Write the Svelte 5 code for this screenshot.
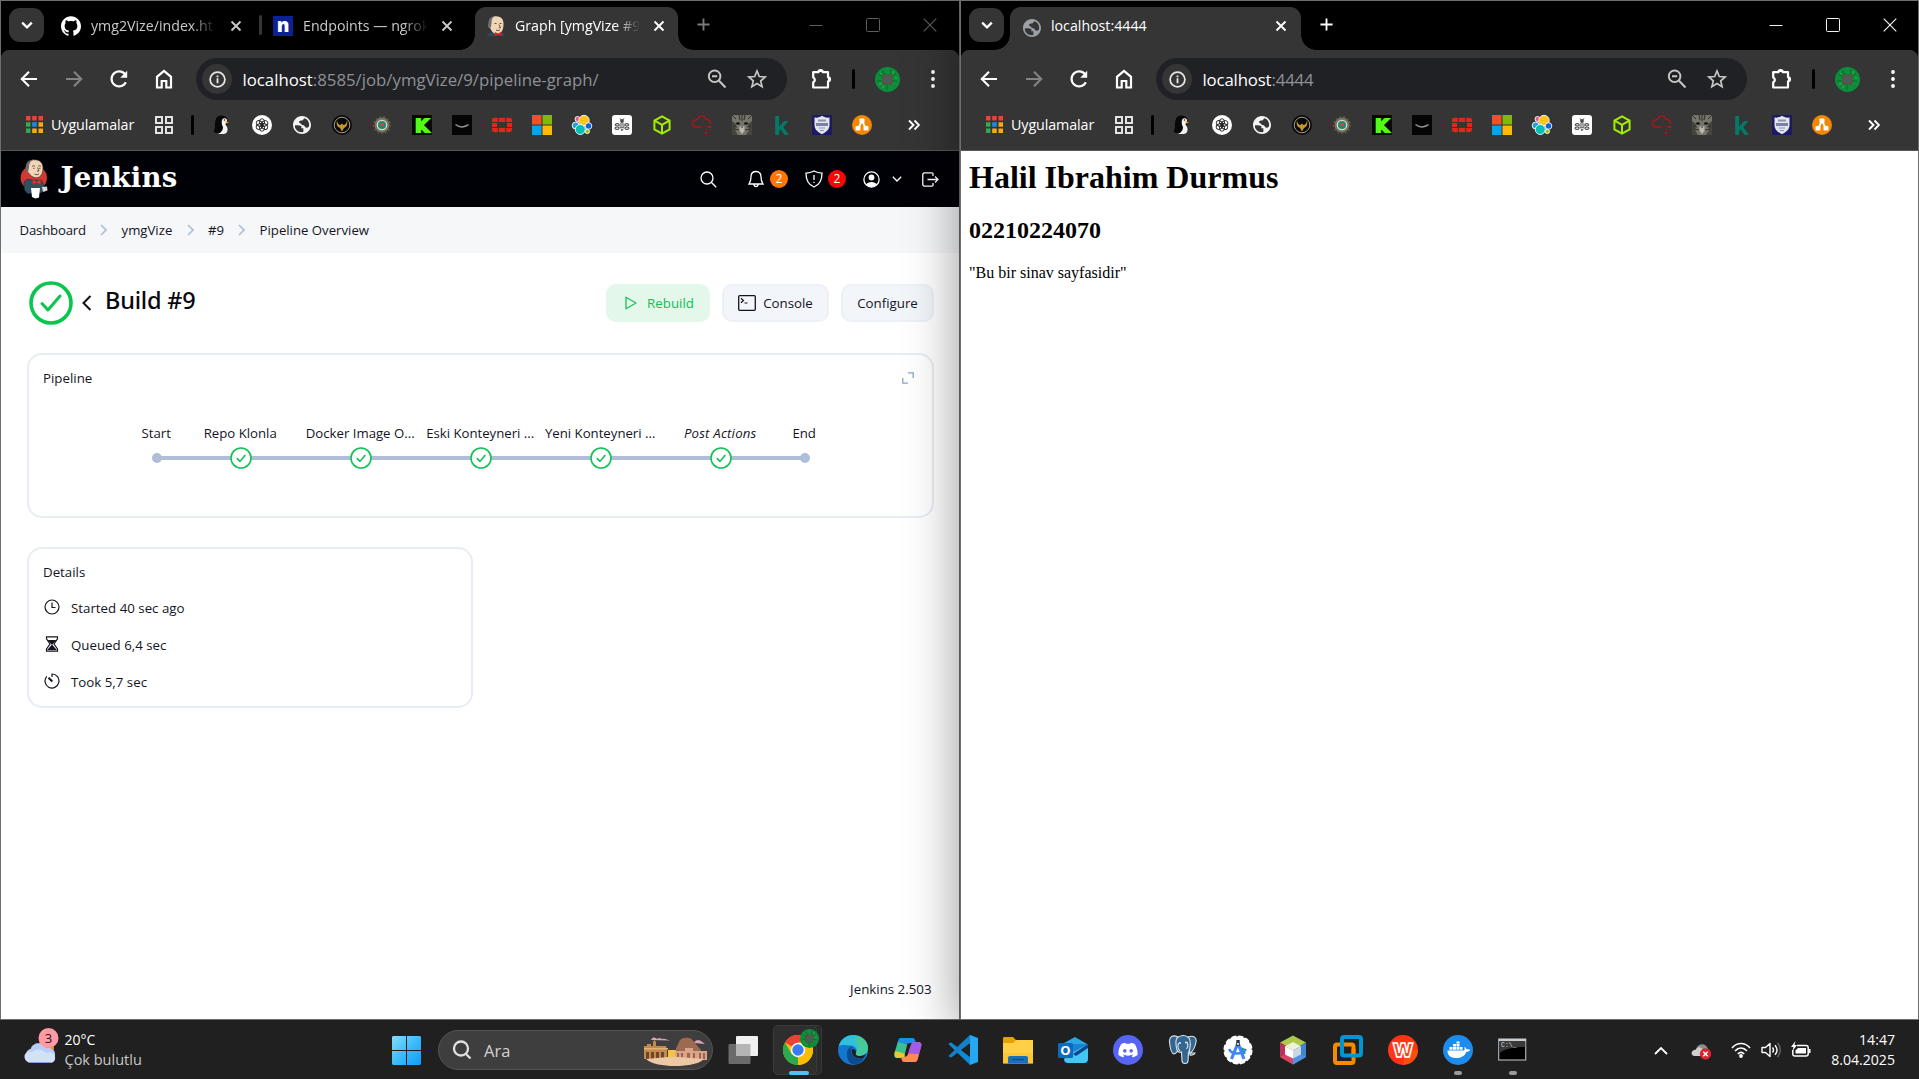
<script>
  // Drawings are inner SVG markup; each set shares one viewBox.
  // Toolbar glyphs: 24 x 24
  const glyphs = {
    back: '<path d="M20 12H5M12 4.800 4.800 12l7.200 7.200" fill="none" stroke="#fff" stroke-width="2.100"/>',
    forward: '<path d="M4 12h15M12 4.800l7.200 7.200-7.200 7.200" fill="none" stroke="#848484" stroke-width="2.100"/>',
    reload: '<path d="M18.800 15.200A7.500 7.500 0 1 1 19 9" fill="none" stroke="#fff" stroke-width="2.200"/><path d="M20.200 3.800v7h-7z" fill="#fff"/>',
    home: '<path d="M5 20.500V9.800L12 4l7 5.800V20.500H14.300V14H9.700V20.500z" fill="none" stroke="#fff" stroke-width="2.200"/>',
    info: '<circle cx="12" cy="12" r="7.700" fill="none" stroke="#e8e8e8" stroke-width="1.800"/><path d="M12 10.800v5M12 7.800v1.900" stroke="#e8e8e8" stroke-width="1.900"/>',
    zoom: '<circle cx="9.600" cy="9.300" r="5.800" fill="none" stroke="#c7c7c7" stroke-width="1.900"/><path d="M13.800 13.500 20.500 20.500M7 9.300h5.200" fill="none" stroke="#c7c7c7" stroke-width="2"/>',
    star: '<path d="M12 4l2.300 5.500 5.900.500-4.500 3.900 1.400 5.800-5.100-3.100-5.100 3.100 1.400-5.800L3.800 10l5.900-.500z" fill="none" stroke="#c7c7c7" stroke-width="1.700"/>',
    puzzle: '<path d="M4.200 5.200h5.300a2.100 2.100 0 0 1 4.200 0h5.300v5.100a2 2 0 0 1 0 4v6.200H4.200v-5.200a2.600 2.600 0 0 0 0-4.800z" fill="none" stroke="#fff" stroke-width="2.200" stroke-linejoin="round"/><path d="M9.600 5a2.200 2.200 0 0 1 4.200 0zM19 10.300a2.100 2.100 0 0 1 0 4z" fill="#fff"/>',
    menu: '<g fill="#fff"><circle cx="12" cy="5" r="1.900"/><circle cx="12" cy="12" r="1.900"/><circle cx="12" cy="19" r="1.900"/></g>',
    down: '<path d="M7.200 9.600 12 14.400l4.800-4.800" fill="none" stroke="#fff" stroke-width="2.200"/>',
    globe: '<path transform="translate(1.200 1.200) scale(.9)" fill="currentColor" d="M12 2C6.480 2 2 6.480 2 12s4.480 10 10 10 10-4.480 10-10S17.520 2 12 2zM4 12.500c3-.300 5.500-.200 7 .500.800.600.500 1.500 0 2.500h2.500v4.300c-5 1-9.500-2.300-9.500-7.300zM12.500 12c-1.500-.200-1.200-2-3-2.300-1.200-.300-1-1.700 0-2.200 1.500-.800 3.500.300 4-1.500.200-.700.800-1.300 1.500-1.500 3 1.200 5 4 5 7.500-.200 2-1 3-2.500 3-1.500.2-2-.5-2.500-1.500-.5-.9-1-1.400-2.500-1.500z"/>'
  };

  const board = '<circle cx="12.500" cy="12.500" r="12.500" fill="#0b8f3c"/><g fill="none" stroke="#0a5f2a" stroke-width=".8"><path d="M3 8h4v3M8 3v4h3M16 2v5M21 6l-3 3M22 14h-5M20 19l-4-3M12 23v-5M6 20l3-4M2 14h5"/></g><g stroke="#67bb43" stroke-width=".7"><path d="M5 6l3 2M18 4v3M19 18l-2-2M8 21v-3M4 17h3M20 11h2"/></g><rect x="7.500" y="7.500" width="10" height="10" fill="#5b4a30"/><rect x="8.300" y="8.300" width="8.400" height="8.400" fill="#575757"/>';

  // Butler figure, 28 x 40
  const butler = '<ellipse cx="13.800" cy="18.800" rx="13.200" ry="12.600" fill="#d33833"/><path d="M7 20.500 4 23l.5 8 3 3.500 13-.5 4-2.500-1-6-2-4z" fill="#335061" stroke="#1c2a33" stroke-width=".6"/><path d="M6.500 8C6 3 10 .700 14.500.700c5.500 0 8.500 3.500 8.500 8.300 0 5.500-2 9.500-6.500 9.800-3.500.2-6.500-2.500-8-5C7 13 5.500 11.500 6.500 8z" fill="#f0d6b7" stroke="#3a3029" stroke-width=".7"/><path d="M6 11.500C4.500 5 8.500 1 13 .800 9.500 3 9 6 9 8.500l-1 4.500z" fill="#6d6b6d"/><path d="M12 7.500c1-1 2-1 3 0M18 7.500c1-1 2-1 3 0M17.500 8.500l1.500 3.500-2 .2M14.500 15c2 1.200 3.500.5 4.500 0M13 9.300h1.500M19 9.300h1.500" stroke="#4b3526" stroke-width=".8" fill="none"/><path d="M12.500 20l4 2.800 4.500-3-.5 6-4-2-4 2z" fill="#d33833" stroke="#831" stroke-width=".4"/><path d="M11 29h9l-1 9.500-3.500 1-3.500-1.500z" fill="#fff"/><path d="M22 28l5-.5.500 4-4.500 1.500z" fill="#d8d8d8"/>';

  // Butler portrait, 20 x 20
  const butlerHead = '<path d="M1 20c0-2 3-3.500 6-3.500h9c1.500.5 2.500 1.500 2.500 3.500z" fill="#2d4a5c"/><path d="M3 7.500C2.500 2.500 6 .200 10 .200c5 0 7.500 2.800 7.500 7.500 0 5.500-1.500 9.800-6 10.300-3.500.3-6-2.500-7-5.500C2.500 11.500 2 10 3 7.500z" fill="#f0d6b7"/><path d="M2.500 11C1.300 4.500 4.500.600 9 .300 6 2 5.500 4 5.500 7l-.8 5z" fill="#6d6b6d"/><path d="M8.500 7.500h2M13.500 7.500h2M13 8.500l1.500 3.200-1.800.2M10 14c1.500.8 3 .6 4 0" stroke="#5a4030" stroke-width=".9" fill="none"/><path d="M9 16l3 1.500 3.500-1.800V20L12 18.800 9 20z" fill="#e01f1f"/>';

  // Bookmark favicons: 20 x 20
  const favicons = [
    ['penguin', '<path d="M1.500 16.500C4 14 2 8 4 4 5.500 0 10 0 13 1.500c2.500 1 3 4 2.500 7L14 18H4z" fill="#080808"/><path d="M10 5c1-2.500 4.500-2 5 0 .5 2-1 3-1.500 4.500 3 3 3 9-1.500 9.500H6c3.500-1.500 5-4 5-7-1.500-2-1.500-5-1-7z" fill="#f2f2f2"/><circle cx="12.500" cy="5" r=".8" fill="#111"/><path d="M13.500 6l3.500 1.500-3.500 1.300z" fill="#e7ad18"/>'],
    ['knot', '<circle cx="10" cy="10" r="10" fill="#fff"/><g fill="none" stroke="#222" stroke-width=".9"><ellipse cx="10" cy="7" rx="2.600" ry="3.300"/><ellipse cx="10" cy="7" rx="2.600" ry="3.300" transform="rotate(60 10 10)"/><ellipse cx="10" cy="7" rx="2.600" ry="3.300" transform="rotate(120 10 10)"/><ellipse cx="10" cy="7" rx="2.600" ry="3.300" transform="rotate(180 10 10)"/><ellipse cx="10" cy="7" rx="2.600" ry="3.300" transform="rotate(240 10 10)"/><ellipse cx="10" cy="7" rx="2.600" ry="3.300" transform="rotate(300 10 10)"/></g>'],
    ['globe', '<g color="#f4f4f4" transform="translate(-2 -2)">' + glyphs.globe + '</g>'],
    ['eagle', '<circle cx="10" cy="10" r="10" fill="#0a0a0a"/><circle cx="10" cy="10" r="7.800" fill="none" stroke="#b5ad98" stroke-width=".9"/><path d="M5 5.500c.5 3 2 4.500 3.500 4.500L10 8.500l1.500 1.500C13 10 14.500 8.500 15 5.500c1 4-.5 6.500-3 7.500l-2 3.500L8 13c-2.500-1-4-3.500-3-7.500z" fill="#c7972a"/>'],
    ['crest', '<circle cx="10" cy="10" r="7.500" fill="#77755c"/><circle cx="10" cy="10" r="8.300" fill="none" stroke="#5f5a49" stroke-width="1.400" stroke-dasharray="2 2"/><circle cx="10" cy="10" r="5.300" fill="#d9ded2"/><circle cx="10" cy="10" r="4" fill="#19887b"/><path d="M8 8h4v2.500L10 12l-2-1.500z" fill="#c74a42"/>'],
    ['kick', '<rect width="20" height="20" fill="#060906"/><text x="10" y="16.500" text-anchor="middle" font-family="DejaVu Sans" font-weight="700" font-size="18" fill="#53fc18" stroke="#53fc18" stroke-width="1.800">K</text>'],
    ['smile', '<rect width="20" height="20" fill="#050505"/><path d="M3.500 9.500c4 3 9 3 13 .2" fill="none" stroke="#9a9a9a" stroke-width="1.500"/>'],
    ['firewall', '<g fill="#e1261c"><rect x="6.800" y="2.800" width="6.400" height="4.200"/><rect x="6.800" y="13" width="6.400" height="4.200"/><path d="M0 7V5.500A2.700 2.700 0 0 1 2.700 2.800H5.800V7zM14.200 2.800h3.100A2.700 2.700 0 0 1 20 5.500V7h-5.800zM0 13h5.800v4.200H2.700A2.700 2.700 0 0 1 0 14.500zM14.200 13H20v1.500a2.700 2.700 0 0 1-2.700 2.700h-3.100zM0 8h5v4H0zM15 8h5v4h-5z"/></g>'],
    ['squares', '<path d="M0 0h9.500v9.500H0z" fill="#f25022"/><path d="M10.500 0H20v9.500h-9.500z" fill="#7fba00"/><path d="M0 10.500h9.500V20H0z" fill="#00a4ef"/><path d="M10.500 10.500H20V20h-9.500z" fill="#ffb900"/>'],
    ['dots', '<g stroke="#fff" stroke-width=".9"><circle cx="3.700" cy="10.500" r="3.500" fill="#1aa0e0"/><circle cx="5.500" cy="4" r="2.500" fill="#f04e98"/><circle cx="12" cy="5.500" r="5.200" fill="#fec514"/><circle cx="16.500" cy="11" r="3.300" fill="#0b64dd"/><circle cx="8.300" cy="14.500" r="5" fill="#00bfb3"/><circle cx="15.300" cy="16.400" r="2.200" fill="#93c90e"/></g>'],
    ['bee', '<rect width="20" height="20" rx="3" fill="#fff"/><g fill="#4a4a4a"><circle cx="10" cy="6" r="1.900"/><path d="M8 8.500h4v1H8zM7.500 10.400h5v1h-5zM7.500 12.300h5v1h-5zM8.300 14.200h3.400L10 16.300z"/></g><g fill="none" stroke="#4a4a4a" stroke-width="1.100"><ellipse cx="5.300" cy="9.800" rx="2" ry="1.200"/><ellipse cx="14.700" cy="9.800" rx="2" ry="1.200"/><ellipse cx="5" cy="13.200" rx="2" ry="1.200"/><ellipse cx="15" cy="13.200" rx="2" ry="1.200"/></g><path d="M8 3.300l1 1.700M12 3.300L11 5" stroke="#4a4a4a" stroke-width=".8"/>'],
    ['cube', '<path d="M10 1.300 17.600 5.500v9L10 18.700 2.400 14.500v-9zM2.600 5.700 10 9.900l7.400-4.200M10 9.900v8.700" fill="none" stroke="#9fef00" stroke-width="2"/>'],
    ['cloud', '<path d="M9 12H4a3.500 3.500 0 0 1-.2-7C5 3.500 6 4 6 4c1-4 7-4 7.500.500C17 4 19 6 18.500 9" fill="none" stroke="#b3141a" stroke-width="1.300"/><path d="M10 12h8M13 15h6M12 18.500h3" stroke="#6b2023" stroke-width="1.800" stroke-dasharray="4 1"/><path d="M16 11h3v2h-3zM13 17h2v2h-2z" fill="#a31920"/>'],
    ['cat', '<rect width="20" height="20" fill="#77756b"/><path d="M0 6 4 9l-1 6 3 5H0zM20 6l-4 3 1 6-3 5h6z" fill="#46453f"/><path d="M0 0l4 4M7 0l1 5M10 0v6M13 0l-1 5M20 0l-4 4M2 14l5 1M18 14l-5 1M1 11l4 1M19 11l-4 1" stroke="#2e2d27" stroke-width="1"/><path d="M7.500 11l2.500 1 2.500-1v5L10 19l-2.500-3z" fill="#b9b7ac"/><ellipse cx="6" cy="8.500" rx="2.100" ry="1.300" fill="#16150f"/><ellipse cx="14" cy="8.500" rx="2.100" ry="1.300" fill="#16150f"/><path d="M9 12h2l-1 1.300z" fill="#332"/>'],
    ['kaspersky', '<text x="1.500" y="19.500" font-family="Open Sans" font-weight="700" font-size="25" fill="#037a66">k</text>'],
    ['shield', '<rect width="20" height="20" fill="#1b1a63"/><path d="M2.500 2.500C6 3 8 2 10 .800 12 2 14 3 17.500 2.500V10c0 5-4 7.500-7.500 9.200C6.500 17.500 2.500 15 2.500 10z" fill="#e2e4ea"/><path d="M4 8h12v3H4z" fill="#7a80a8"/><path d="M6 4.500h8v2H6zM7 12.500h6v1H7zM8 15h4v1H8z" fill="#8d93b3"/>'],
    ['nodes', '<circle cx="10" cy="10" r="10" fill="#f08705"/><path d="M10 6 6 13.500M10 6l4 7.500" stroke="#fff" stroke-width="1.800"/><g fill="#fff"><rect x="7.500" y="3.500" width="5" height="4.500" rx=".8"/><rect x="3.500" y="11" width="5" height="4.500" rx=".8"/><rect x="11.500" y="11" width="5" height="4.500" rx=".8"/></g>']
  ];

  // Taskbar programs: 30 x 30
  const apps = [
    ['edge', '<circle cx="15" cy="15" r="15" fill="#1377d0"/><path d="M.800 11.500C2.500 4 8.500 0 15 0c9 0 15 6 15 13 0 5-4 8-8 8-3.500 0-5-1.500-4-3 2-3-.5-7-5-7.500C8 10 3 9 .800 11.500z" fill="#2fc0dc"/><path d="M21 1.200c6 2.300 9 7 9 11.800 0 5-4 8-8 8-3.500 0-5-1.500-4-3 3-6 1-12-3-14z" fill="#4ed07c" opacity=".7"/><path d="M18 17.800c-1 1.700.5 3.200 4 3.200 2.500 0 4.500-.9 6-2.500-.5 1.500-1 2.500-1.800 3.700C24 23.800 20 24 17 22c-3-1.700-3.800-5-3-8 2-.500 5 1.500 4 3.800z" fill="#202020"/><path d="M9 19c0-4 2-7 5.500-7.500-3 4-1 10 4 11.500 3 .800 6 .300 8-.800C23.500 27.500 19 29.500 16 29.500 11 29 9 24 9 19z" fill="#0d4a8f"/>'],
    ['copilot', '<path d="M8 3h11c3 0 3 2 4 5h-5c-3 0-3 2-4 5l-2 7c-1 3-2 3-4 3H4c-3 0-3-2-2.500-5L5 6c.800-2.500 1.500-3 3-3z" fill="#1b8ee6"/><path d="M5 7 2 17c-1 4 0 6 3 6h4c2 0 2.500-1 3.500-4L15 10z" fill="#3dc08b"/><path d="M2 16c-1 5 0 7 3 7h4c2 0 2.500-1 3.500-4z" fill="#e9c928"/><path d="M22 27H12c-3 0-3-2-4-5h3c3 0 3-1 4-4l3-8c1-3 2-3 4-3h3c3 0 4 2 3 5l-3 11c-.800 3-1.500 4-3 4z" fill="#ee5a78"/><path d="M18 10c1-3 2-3 4-3h3c3 0 4 2 3 5l-2 7-11-1z" fill="#a35be8"/><path d="M12 27c-3 0-3-2-4-5h3c2 0 3-1 3.500-3H26l-1 4c-1 3-1.500 4-3 4z" fill="#ff9b4a" opacity=".75"/><path d="M14.500 8.500h3l-3 12h-3z" fill="#202020"/>'],
    ['vscode', '<path d="M22 0l8 3v24l-8 3z" fill="#24a8f2"/><path d="M22 0 9 12 3 7.500.500 9 9 17l-8.500 4L3 22.500 22 8z" fill="#0b72b8"/><path d="M.500 9 3 7.500 22 22v8L.500 9z" fill="#0d8ad3"/><path d="M.500 21 3 22.500 22 8V0L.500 21z" fill="#1480c7"/>'],
    ['files', '<path d="M0 3.500C0 2.500.700 2 1.500 2H10l3 3h15.500c1 0 1.500.600 1.500 1.500V10H0z" fill="#e3a007"/><path d="M0 8h10l3-3h17v23.500H0z" fill="#ffcf45"/><path d="M0 18h30v10.500H0z" fill="#f9be24" opacity=".5"/><path d="M5 28.500V23c0-1.300.800-2 2-2h16c1.200 0 2 .700 2 2v5.500z" fill="#1670bd"/><path d="M9 24.500h12" stroke="#0c4f8d" stroke-width="1.400"/>'],
    ['outlook', '<path d="M6 8 17 2l12 7v4H6z" fill="#2aa7e5"/><path d="M6 9h23v10H6z" fill="#1684d1"/><path d="M10 20 30 9v15c0 2.500-1.500 4-4 4H10c-2 0-4-1-4-4z" fill="#41c8f0"/><path d="M15 19 30 9v4L18 21z" fill="#0a448e"/><rect y="8" width="15" height="15" rx="1.500" fill="#0c69be"/><text x="7.500" y="20" text-anchor="middle" font-family="Open Sans" font-weight="700" font-size="13" fill="#fff">O</text>'],
    ['discord', '<circle cx="15" cy="15" r="15" fill="#5865f2"/><path transform="translate(5.400 5.500) scale(.8)" fill="#fff" d="M20.317 4.370a19.790 19.790 0 00-4.885-1.515c-.211.375-.520.902-.687 1.287-1.845-.276-3.680-.276-5.487 0-.164-.393-.406-.910-.696-1.287a19.736 19.736 0 00-4.885 1.515C.533 9.046-.319 13.580.099 18.058c2.053 1.508 4.041 2.423 6.077 3.030.520-.658.931-1.323 1.226-2.022-.653-.248-1.316-.655-1.914-.998l.445-.440c3.928 1.793 8.180 1.793 12.140 0l.444.441c-.598.350-1.217.656-1.913.998.360.698.731 1.390 1.225 2.022 2.045-.607 4.034-1.522 6.087-3.030.500-5.177-.838-9.674-3.599-13.689zM8.020 15.331c-1.183 0-2.157-1.086-2.157-2.419s.956-2.419 2.157-2.419c1.211 0 2.176 1.095 2.157 2.419 0 1.333-.956 2.419-2.157 2.419zm7.975 0c-1.183 0-2.157-1.086-2.157-2.419s.955-2.419 2.157-2.419c1.211 0 2.176 1.095 2.157 2.419 0 1.333-.946 2.419-2.157 2.419z"/>'],
    ['elephant', '<g fill="#336791" stroke="#dfe5ea" stroke-width="1.100"><path d="M10 2C5-.500 1 1.500 1.500 7c.500 5 2 12 4.500 12 1.500 0 2.500-2 4-3z"/><path d="M20 2c5-2 9 0 8 5-.800 4-3 9-5.500 11H27c0 1.500-3.500 2.500-5 2z"/><path d="M9 3c4-3.500 9-3 12 0 2 3 1.500 11-.500 15l-.500 8c-.300 3-5.500 3.500-6 0l-.500-9c-2 1-4-.500-4.500-2C8 11 7 6 9 3z"/><path d="M10.500 8c-1 3-.500 6 1.500 8M19 7c1 2 1 5-.500 7" fill="none"/></g><circle cx="12" cy="8" r=".9" fill="#fff"/><circle cx="18" cy="7.500" r=".9" fill="#fff"/>'],
    ['compass', '<circle cx="15" cy="15" r="13.700" fill="#fff"/><circle cx="15" cy="15" r="13.800" fill="none" stroke="#fff" stroke-width="1.500" stroke-dasharray="5 2.220"/><path d="M18 12l4 2 .500 5-4 0z" fill="#249a58"/><path d="M15 8 8.500 24M15 8l6 16" stroke="#4285f4" stroke-width="3.200"/><path d="M6 14c3 6 13 6 17 0" stroke="#4285f4" stroke-width="2.600" fill="none"/><rect x="13.300" y="5" width="3.400" height="6" fill="#2f343a"/><circle cx="15" cy="9" r="1" fill="#fff"/>'],
    ['netbeans', '<path d="M15 .500 28 7.500 15 15 2 7.500z" fill="#adc84a"/><path d="M2 7.500 15 15v14.500L2 22z" fill="#b83259"/><path d="M28 7.500 15 15v14.500L28 22z" fill="#3f83d3"/><path d="M2 22l13-6v13.500z" fill="#d84465"/><path d="M28 22l-13-6v13.500z" fill="#4d93e2"/><path d="M15 7l8 4.200-8 4-8-4z" fill="#eef2dd"/><path d="M7 11.200l8 4v8.300l-8-4z" fill="#fff"/><path d="M23 11.200l-8 4v8.300l8-4z" fill="#cbd6e3"/>'],
    ['vmware', '<rect x="2" y="9.500" width="18.500" height="18.500" rx="2" fill="none" stroke="#f38b00" stroke-width="4"/><rect x="9" y="2" width="19" height="18.500" rx="2" fill="none" stroke="#0095d3" stroke-width="4"/><path d="M20.500 14v5" stroke="#f38b00" stroke-width="4"/>'],
    ['wps', '<circle cx="15" cy="15" r="15" fill="#ff3515"/><path d="M15 30A15 15 0 0 0 30 15H18z" fill="#ff5a08" opacity=".7"/><text x="15" y="22" text-anchor="middle" font-family="Inter" font-weight="900" font-size="19" fill="#ff3d12" stroke="#fff" stroke-width="1.500">W</text>'],
    ['docker', '<circle cx="15" cy="15" r="15" fill="#1d8cec"/><path d="M4.500 15.500h15.800c1.500 0 1.700-1.500 1-3.500 1.700.500 2 1.500 2.200 2.300 1.500-.300 3-.100 3.700.500-.700 1.500-2 2-3.700 2C21.500 21.500 18 23 13 23c-5 0-8.500-2-8.500-7.500z" fill="#fff"/><path d="M6.500 12h3v2.800h-3zM10 12h3v2.800h-3zM13.500 12h3v2.800h-3zM10 9h3v2.500h-3zM13.500 9h3v2.500h-3zM13.500 6.500h3v2h-3zM17 12h2.500v2.800H17z" fill="#fff"/>'],
    ['console', '<rect x=".700" y="4" width="27" height="21" fill="#000" stroke="#a9aeb2" stroke-width="1.200"/><path d="M1 4h27v2.300H1z" fill="#c9cdd0"/><path d="M1.500 6.500h25.700V12C17 12 8 13 1.500 18z" fill="#3a3a3a"/><text x="3" y="12" font-family="Liberation Mono" font-size="6.500" fill="#ddd">C:\\_</text>']
  ];

  const chrome = '<circle cx="15" cy="15" r="15" fill="#fbbc04"/><path d="M15 15 2 7.500A15 15 0 0 1 28 7.500H15z" fill="#ea4335"/><path d="M2 7.500A15 15 0 0 0 15 30l6.500-11.200-13-.100z" fill="#2da94f"/><path d="M28 7.500H15v15L15 30A15 15 0 0 0 28 7.500z" fill="#fbbc04"/><path d="M8.500 18.700 15 30l-4-1z" fill="#2da94f"/><circle cx="15" cy="15" r="7.200" fill="#fff"/><circle cx="15" cy="15" r="5.700" fill="#3a7cf0"/>';
  const plaza = '<path d="M7 5c2-4 5-2 6-1 3-2 4 0 5 0 3-1 5 1 8 1.500zM50 8c2-4 4-2 5-3 3 1 4 3 6 4z" fill="#d9a3b5"/><path d="M0 11h3V9h4v2h2V7l1.500-2L12 7v4h10l1 4v9H0z" fill="#c48a4d"/><path d="M0 13h24v1.500H0z" fill="#e2b070"/><path d="M2 17h3v7H2zM7 17h3v7H7zM12 17h3v7h-3zM17 17h3v7h-3z" fill="#6f4629"/><path d="M24 15h8v10h-8z" fill="#f6c343"/><path d="M32 13c3-3 2-9 8-10 5-1 8 0 10 4l7 8v10H32z" fill="#9c6a50"/><path d="M31 16h10v-3h8v3h14v9H31z" fill="#d9a489"/><path d="M33 18h2v5h-2zM37 18h2v5h-2zM43 18h3v6h-3zM49 18h2v6h-2zM55 18h2v6h-2zM59 18h2v6h-2z" fill="#9c6450"/><path d="M2 24l22-2h10l26 2c-6 6-20 7-30 7S7 29 2 24z" fill="#edc8a4"/>';

  const stages = [
    { label: 'Start', x: 128, kind: 'dot' },
    { label: 'Repo Klonla', x: 212, kind: 'ok' },
    { label: 'Docker Image O...', x: 332, kind: 'ok' },
    { label: 'Eski Konteyneri ...', x: 452, kind: 'ok' },
    { label: 'Yeni Konteyneri ...', x: 572, kind: 'ok' },
    { label: 'Post Actions', x: 692, kind: 'ok', italic: true },
    { label: 'End', x: 776, kind: 'dot' }
  ];

  const details = [
    { text: 'Started 40 sec ago', icon: '<circle cx="8" cy="8" r="7"/><path d="M8 3.500V8.500h3.500"/>' },
    { text: 'Queued 6,4 sec', icon: '<path d="M2.500.900h11v2L10 8l3.500 5v2.200h-11V13L6 8 2.500 2.900z"/><path d="M5 4.500h6L8 8zM4.500 13.500 8 9.500l3.500 4z" fill="#14141f"/>' },
    { text: 'Took 5,7 sec', icon: '<path d="M8 4V1a7 7 0 1 1-5.200 2.300"/><path d="M4.500 4.800 8.300 8.500" stroke-width="2"/>' }
  ];

  const crumbs = ['Dashboard', 'ymgVize', '#9', 'Pipeline Overview'];
</script>

{#snippet glyph(name)}
  <svg class="glyph" viewBox="0 0 24 24">{@html glyphs[name]}</svg>
{/snippet}

{#snippet cross(cls)}
  <svg class={cls} viewBox="0 0 12 12"><path d="M1.500 1.500l9 9M10.500 1.500l-9 9" fill="none" stroke="currentColor" stroke-width="1.900" /></svg>
{/snippet}

{#snippet plus(cls)}
  <svg class={cls} viewBox="0 0 14 14"><path d="M7 .500v13M.500 7h13" stroke="currentColor" stroke-width="2" /></svg>
{/snippet}

{#snippet controls(cls)}
  <div class="controls {cls}">
    <svg viewBox="0 0 14 14"><path d="M.500 7.500h13" stroke="currentColor" /></svg>
    <svg viewBox="0 0 14 14"><rect x=".500" y=".500" width="13" height="13" rx="1" fill="none" stroke="currentColor" /></svg>
    <svg viewBox="0 0 14 14"><path d="M.700.700l12.600 12.600M13.300.700.700 13.300" stroke="currentColor" stroke-width="1.200" /></svg>
  </div>
{/snippet}

{#snippet toolbar(host, path)}
  <div class="toolbar">
    <span class="cell">{@render glyph('back')}</span>
    <span class="cell">{@render glyph('forward')}</span>
    <span class="cell">{@render glyph('reload')}</span>
    <span class="cell">{@render glyph('home')}</span>
    <div class="omnibox">
      <span class="info">{@render glyph('info')}</span>
      <span class="url">{host}<i>{path}</i></span>
      <span class="omni-icon">{@render glyph('zoom')}</span>
      <span class="omni-icon">{@render glyph('star')}</span>
    </div>
    <span class="cell">{@render glyph('puzzle')}</span>
    <span class="divider"></span>
    <svg class="avatar" viewBox="0 0 25 25">{@html board}</svg>
    <span class="cell menu">{@render glyph('menu')}</span>
  </div>
  <div class="bookmarks">
    <svg class="apps" viewBox="0 0 17 17">
      <path d="M0 0h4.500v4.500H0zM6.200 0h4.500v4.500H6.200zM12.500 0H17v4.500h-4.500z" fill="#ef4136" />
      <path d="M0 6.200h4.500v4.500H0zM0 12.500h4.500V17H0z" fill="#34a853" />
      <path d="M6.200 6.200h4.500v4.500H6.200z" fill="#1a8cf0" />
      <path d="M12.500 6.200H17v4.500h-4.500zM6.200 12.500h4.500V17H6.200zM12.500 12.500H17V17h-4.500z" fill="#fbab10" />
    </svg>
    <span class="apps-label">Uygulamalar</span>
    <svg class="grid" viewBox="0 0 18 18"><path d="M1 1h6v6H1zM11 1h6v6h-6zM1 11h6v6H1zM11 11h6v6h-6z" fill="none" stroke="#e3e3e3" stroke-width="2" /></svg>
    <span class="bar"></span>
    {#each favicons as [name, art] (name)}
      <span class="fav"><svg viewBox="0 0 20 20">{@html art}</svg></span>
    {/each}
    <svg class="more" viewBox="0 0 12 12"><path d="M1 1.500 5.500 6 1 10.500M6.500 1.500 11 6l-4.500 4.500" fill="none" stroke="#fff" stroke-width="1.900" /></svg>
  </div>
{/snippet}

<div class="desktop">
  <div class="windows">
    <section class="window left">
      <div class="strip">
        <span class="search-tabs">{@render glyph('down')}</span>
        <div class="tab first">
          <svg class="icon" viewBox="0 0 24 24"><path fill="#fff" d="M12 .297c-6.630 0-12 5.373-12 12 0 5.303 3.438 9.800 8.205 11.385.600.113.820-.258.820-.577 0-.285-.010-1.040-.015-2.040-3.338.724-4.042-1.610-4.042-1.610C4.422 18.070 3.633 17.700 3.633 17.700c-1.087-.744.084-.729.084-.729 1.205.084 1.838 1.236 1.838 1.236 1.070 1.835 2.809 1.305 3.495.998.108-.776.417-1.305.760-1.605-2.665-.300-5.466-1.332-5.466-5.930 0-1.310.465-2.380 1.235-3.220-.135-.303-.540-1.523.105-3.176 0 0 1.005-.322 3.300 1.230.960-.267 1.980-.399 3-.405 1.020.006 2.040.138 3 .405 2.280-1.552 3.285-1.230 3.285-1.230.645 1.653.240 2.873.120 3.176.765.840 1.230 1.910 1.230 3.220 0 4.610-2.805 5.625-5.475 5.920.420.360.810 1.096.810 2.220 0 1.606-.015 2.896-.015 3.286 0 .315.210.690.825.570C20.565 22.092 24 17.592 24 12.297c0-6.627-5.373-12-12-12" /></svg>
          <span class="title">ymg2Vize/index.ht</span>
          {@render cross('close')}
        </div>
        <span class="tab-divider"></span>
        <div class="tab second">
          <svg class="icon" viewBox="0 0 20 20"><rect width="20" height="20" fill="#0b2294" /><text x="10" y="15.500" text-anchor="middle" font-family="Open Sans" font-weight="800" font-size="19" fill="#fff">n</text></svg>
          <span class="title">Endpoints — ngrok</span>
          {@render cross('close')}
        </div>
        <div class="tab active">
          <svg class="icon" viewBox="0 0 20 20">{@html butlerHead}</svg>
          <span class="title">Graph [ymgVize #9</span>
          {@render cross('close')}
        </div>
        {@render plus('new-tab dim')}
        {@render controls('dim')}
      </div>
      {@render toolbar('localhost', ':8585/job/ymgVize/9/pipeline-graph/')}
      <div class="page jenkins">
        <header>
          <svg class="logo" viewBox="0 0 28 40">{@html butler}</svg>
          <span class="brand">Jenkins</span>
          <svg class="h-search" viewBox="0 0 17 17"><circle cx="7" cy="7" r="6" /><path d="M11.500 11.500l4.700 4.700" /></svg>
          <svg class="h-bell" viewBox="0 0 16 18"><path d="M8 1.500c-3.300 0-5 2.300-5 5.200 0 4-1 5.500-2 7.300h14c-1-1.800-2-3.300-2-7.300 0-2.900-1.700-5.200-5-5.200zM6 14.500a2 2 0 0 0 4 0" /></svg>
          <span class="count orange">2</span>
          <svg class="h-shield" viewBox="0 0 18 18"><path d="M9 1C6.500 2.300 4 3 1 3.200 1 9 3 14.500 9 17c6-2.500 8-8 8-13.800C14 3 11.500 2.300 9 1zM9 5v5M9 11.800v1.200" /></svg>
          <span class="count red">2</span>
          <svg class="h-user" viewBox="0 0 17 17"><circle cx="8.500" cy="8.500" r="7.600" /><circle cx="8.500" cy="6.500" r="2.900" fill="#fff" stroke="none" /><path d="M3 13.500c2-3.500 9-3.500 11 0-3 3.300-8 3.300-11 0z" fill="#fff" stroke="none" /></svg>
          <svg class="h-down" viewBox="0 0 10 6"><path d="M.800.800 5 5 9.200.800" /></svg>
          <svg class="h-out" viewBox="0 0 17 15"><path d="M11 4V1.500L10 .800H2L.800 2v11L2 14.200h8l1-.700V11M5.500 7.500H16M13 4.500l3 3-3 3" /></svg>
        </header>
        <nav>
          {#each crumbs as crumb, i (crumb)}
            {#if i}<svg viewBox="0 0 7 12"><path d="M1 1l5 5-5 5" fill="none" stroke="#aebfd8" stroke-width="1.700" /></svg>{/if}
            <span>{crumb}</span>
          {/each}
        </nav>
        <div class="heading">
          <svg class="status" viewBox="0 0 44 44"><circle cx="22" cy="22" r="20" /><path d="M13 22.500l6 6.500L31 15" /></svg>
          <svg class="prev" viewBox="0 0 10 16"><path d="M8.500 1 1.500 8l7 7" /></svg>
          <h1>Build #9</h1>
          <div class="actions">
            <span class="btn rebuild"><svg viewBox="0 0 12 14"><path d="M1 1.200v11.600L11 7z" fill="none" stroke="#1ac25a" stroke-width="1.300" stroke-linejoin="round" /></svg>Rebuild</span>
            <span class="btn console"><svg viewBox="0 0 18 16"><rect x=".700" y=".700" width="16.600" height="14.600" rx="1" fill="none" stroke="#14141f" stroke-width="1.300" /><path d="M3 3.200l2.500 2.300L3 7.800M6.500 8h3" fill="none" stroke="#14141f" stroke-width="1.200" /></svg>Console</span>
            <span class="btn configure">Configure</span>
          </div>
        </div>
        <div class="card pipeline">
          <div class="card-title">Pipeline
            <svg viewBox="0 0 12 12"><path d="M6 .800h5.200V6M6 11.200H.800V6" fill="none" stroke="#8ea3c7" stroke-width="1.300" /></svg>
          </div>
          <svg class="graph" viewBox="0 0 903 60">
            <path d="M128 42H776" stroke="#afbdd8" stroke-width="4" />
            {#each stages as s (s.label)}
              <text x={s.x - 0.8} y="22" class:italic={s.italic}>{s.label}</text>
              {#if s.kind === 'dot'}
                <circle cx={s.x} cy="42" r="5" fill="#afbdd8" />
              {:else}
                <circle cx={s.x} cy="42" r="10" fill="#fff" stroke="#10c254" stroke-width="1.600" />
                <path d="M{s.x - 3.8} 42.600l2.800 2.800 4.900-6" fill="none" stroke="#10c254" stroke-width="1.600" stroke-linecap="round" />
              {/if}
            {/each}
          </svg>
        </div>
        <div class="card details">
          <div class="card-title">Details</div>
          {#each details as d (d.text)}
            <div class="row"><svg viewBox="0 0 16 16" fill="none" stroke="#14141f" stroke-width="1.200">{@html d.icon}</svg>{d.text}</div>
          {/each}
        </div>
        <footer>Jenkins 2.503</footer>
      </div>
    </section>

    <section class="window right">
      <div class="strip">
        <span class="search-tabs">{@render glyph('down')}</span>
        <div class="tab active">
          <span class="icon site">{@render glyph('globe')}</span>
          <span class="title">localhost:4444</span>
          {@render cross('close')}
        </div>
        {@render plus('new-tab')}
        {@render controls('')}
      </div>
      {@render toolbar('localhost', ':4444')}
      <div class="page plain">
        <h1>Halil Ibrahim Durmus</h1>
        <h2>02210224070</h2>
        <p>"Bu bir sinav sayfasidir"</p>
      </div>
    </section>
  </div>

  <div class="taskbar">
    <div class="weather">
      <svg viewBox="0 0 36 38">
        <circle cx="22" cy="20" r="8" fill="#f58a1f" />
        <path d="M8 35a7.500 7.500 0 0 1-1-14.500C8 14 20 13 22 20c6-1 10 3 9 8 1 5-3 7-6 7z" fill="#b7cdf2" />
        <path d="M8 35c-5 0-7.500-3-7.500-6.500S4 23 8 24c4-4 11-3 14 1 5-2 9 1 9 5s-3 5-6 5z" fill="#d3e1f8" />
        <path d="M5 34.500h22" stroke="#7f9fdc" />
        <circle cx="24.500" cy="10" r="10" fill="#ff99a4" />
        <text x="24.500" y="15" text-anchor="middle" font-family="Open Sans" font-size="13" fill="#1a1a1a">3</text>
      </svg>
      <div><b>20°C</b><span>Çok bulutlu</span></div>
    </div>
    <svg class="start" viewBox="0 0 29 29">
      <defs><linearGradient id="win" x1="0" y1="0" x2="1" y2="1"><stop offset="0" stop-color="#86defc" /><stop offset=".5" stop-color="#3cbdf9" /><stop offset="1" stop-color="#0c9cfa" /></linearGradient></defs>
      <path d="M1 0h13v14H0V1zM15 0h13l1 1v13H15zM0 15h14v14H1l-1-1zM15 15h14v13l-1 1H15z" fill="url(#win)" />
    </svg>
    <div class="search">
      <svg class="lens" viewBox="0 0 20 20"><circle cx="9" cy="8.500" r="7" /><path d="M13.500 13.500l5 5" /></svg>
      <span>Ara</span>
      <svg class="plaza" viewBox="0 0 63 31">{@html plaza}</svg>
    </div>
    <div class="pins">
      <span class="pin"><svg viewBox="0 0 30 30"><rect x=".500" y="9" width="22" height="20" rx="1" fill="#6b6b6b" /><rect x="8" y="1" width="22" height="20" rx="1" fill="#f0f0f0" /><rect x="8" y="9" width="14.500" height="12" fill="#b5b5b5" /></svg></span>
      <span class="pin running">
        <svg viewBox="0 0 30 30">{@html chrome}</svg>
        <svg class="profile" viewBox="0 0 25 25">{@html board}</svg>
      </span>
      {#each apps as [name, art] (name)}
        <span class="pin" class:open={name === 'docker' || name === 'console'}><svg viewBox="0 0 30 30">{@html art}</svg></span>
      {/each}
    </div>
    <div class="tray">
      <svg class="up" viewBox="0 0 14 9"><path d="M1 8l6-6 6 6" fill="none" stroke="#fff" stroke-width="1.800" /></svg>
      <svg class="onedrive" viewBox="0 0 21 17"><path d="M5 7c1-7 10-8 12-1 4 2 3 7 0 7H4C-1 13-1 7 5 7z" fill="#8d8d8d" /><path d="M4 13C0 13-.500 7 5 6.500 7 3 11 4 12 8v5z" fill="#cfcfcf" /><circle cx="14.500" cy="11" r="5.700" fill="#d9232e" /><path d="M12.300 8.800l4.400 4.400M16.700 8.800l-4.400 4.400" stroke="#fff" stroke-width="1.500" /></svg>
      <svg class="wifi" viewBox="0 0 20 16"><path d="M1 6c5-6 13-6 18 0M4 9c3.500-4 8.500-4 12 0M6.800 12c2-2.200 4.400-2.200 6.400 0" fill="none" stroke="#fff" stroke-width="1.600" /><circle cx="10" cy="14" r="1.900" fill="#fff" /></svg>
      <svg class="volume" viewBox="0 0 20 16"><path d="M1 5.500h3.500L9 1.500v13L4.500 10.500H1z" fill="none" stroke="#fff" stroke-width="1.400" stroke-linejoin="round" /><path d="M11.500 5.500c1.200 1.500 1.200 3.500 0 5M14 3.200c2.600 3 2.600 6.600 0 9.600" fill="none" stroke="#fff" stroke-width="1.400" /><path d="M16.500 1c3.700 4 3.700 10 0 14" fill="none" stroke="#666" stroke-width="1.400" /></svg>
      <svg class="battery" viewBox="0 0 20 18"><path d="M6 4.500h9c1.500 0 2.200.700 2.200 2.200v6c0 1.500-.700 2.300-2.200 2.300H4c-1.500 0-2.200-.800-2.200-2.300V9" fill="none" stroke="#fff" stroke-width="1.500" /><path d="M18 8h1.500v4H18z" fill="#fff" /><path d="M7 7h8v5.500H4.500V9.500z" fill="#fff" /><path d="M4.500 0 0 6h2.500L1.500 10 6 4H3.500z" fill="#fff" /></svg>
      <div class="clock"><span>14:47</span><span>8.04.2025</span></div>
    </div>
  </div>
</div>

<style>
  :global(body) { background: #202020; overflow: hidden; }
  .desktop { width: 1919px; height: 1079px; overflow: hidden; font-family: 'Open Sans', 'Noto Sans', sans-serif; }
  svg { display: block; flex: none; }
  .windows { display: flex; height: 1020px; overflow: hidden; }
  .window { box-sizing: border-box; height: 1020px; flex: none; border: 1px solid #6e6e6e; background: #353535; display: flex; flex-direction: column; }
  .left { width: 960px; }
  .right { width: 959px; position: relative; box-shadow: 0 12px 50px rgba(0, 0, 0, .42); }

  .strip { height: 49px; flex: none; background: #000; display: flex; align-items: flex-start; padding-left: 8px; }
  .glyph { width: 24px; height: 24px; }
  .search-tabs { width: 35px; height: 34px; margin-top: 7px; border-radius: 11px; background: #353535; display: grid; place-items: center; }
  .tab { display: flex; align-items: center; height: 43px; margin-top: 6px; box-sizing: border-box; padding-bottom: 8px; color: #c9c9c9; }
  .tab .icon { width: 20px; height: 20px; flex: none; margin-top: 3px; overflow: visible; }
  .title { font-size: 14.200px; line-height: 20px; white-space: nowrap; margin: 3px 0 0 10px; flex: none; mask-image: linear-gradient(90deg, #000 100px, transparent 125px); }
  .close { width: 12px; height: 12px; margin-top: 3px; }
  .tab.first { width: 196px; margin-left: 17px; }
  .first .title { width: 130px; margin-right: 9px; }
  .tab-divider { width: 3px; height: 20px; border-radius: 2px; background: #353535; margin-top: 14px; margin-left: 2px; }
  .tab.second { margin-left: 11px; }
  .second .title { width: 130px; margin-right: 8px; }
  .tab.active { position: relative; background: #353535; border-radius: 11px 11px 0 0; color: #fff; }
  .tab.active::before, .tab.active::after { content: ''; position: absolute; bottom: 0; width: 15px; height: 15px; }
  .tab.active::before { left: -15px; background: radial-gradient(circle at 0 0, transparent 14.500px, #353535 15px); }
  .tab.active::after { right: -15px; background: radial-gradient(circle at 100% 0, transparent 14.500px, #353535 15px); }
  .left .tab.active { width: 203px; margin-left: 22px; padding-left: 11px; }
  .left .active .title { width: 130px; margin-left: 9px; margin-right: 8px; }
  .right .tab.active { width: 291px; margin-left: 6px; padding-left: 10px; }
  .right .active .title { width: 200px; margin-left: 11px; margin-right: 24px; mask-image: none; }
  .site { color: #9aa0a6; display: grid; place-items: center; }
  .new-tab { width: 13px; height: 13px; margin: 17px 0 0 19px; color: #fff; }
  .new-tab.dim { color: #7d7d7d; }
  .controls { margin-left: auto; display: flex; gap: 43px; padding: 17px 21px 0 0; color: #f2f2f2; }
  .controls svg { width: 14px; height: 14px; }
  .controls.dim { color: #5d5d5d; padding-right: 22px; }

  .toolbar { position: relative; height: 58px; flex: none; display: flex; align-items: center; padding-left: 5px; box-sizing: border-box; }
  .toolbar::before { content: ''; position: absolute; inset: 0 0 auto 0; height: 9px; background: radial-gradient(circle at 9px 9px, transparent 9px, #000 9.500px) 0 0 / 9px 9px no-repeat, radial-gradient(circle at 0 9px, transparent 9px, #000 9.500px) 100% 0 / 9px 9px no-repeat; }
  .cell { width: 45px; display: grid; place-items: center; flex: none; }
  .omnibox { width: 591px; height: 42px; border-radius: 21px; background: #202125; margin: 0 11.500px 0 10px; display: flex; align-items: center; padding: 0 10px 0 6px; box-sizing: border-box; flex: none; }
  .info { width: 30px; height: 30px; border-radius: 50%; background: #353535; display: grid; place-items: center; }
  .info .glyph { width: 23px; height: 23px; }
  .url { flex: 1; margin-left: 10.500px; font-size: 16.800px; color: #fff; white-space: nowrap; }
  .right .url { letter-spacing: -.150px; }
  .url i { font-style: normal; color: #8e9196; }
  .omni-icon { width: 40px; display: grid; place-items: center; }
  .divider { width: 3px; height: 20px; margin: 0 8px; background: #000; border-radius: 2px; flex: none; }
  .avatar { width: 25px; height: 25px; margin: 0 12px; }
  .menu { width: 42px; }
  .bookmarks { height: 43px; flex: none; display: flex; align-items: center; padding: 0 0 9px 24.500px; box-sizing: border-box; border-bottom: 1px solid #585858; }
  .apps { width: 17px; height: 17px; }
  .apps-label { width: 96px; margin-left: 8.500px; font-size: 14.300px; letter-spacing: -.100px; color: #fff; }
  .grid { width: 18px; height: 18px; margin-left: 8px; }
  .bar { width: 3px; height: 20px; background: #000; border-radius: 2px; margin: 0 8px 0 18px; }
  .fav { width: 40px; display: grid; place-items: center; flex: none; }
  .fav svg { width: 20px; height: 20px; overflow: visible; }
  .more { width: 12px; height: 12px; margin-left: 26px; }

  .page { flex: 1; background: #fff; overflow: hidden; }
  .jenkins { font-size: 13.300px; color: #14141f; display: flex; flex-direction: column; }
  .jenkins header { height: 56px; background: #000007; display: flex; align-items: center; flex: none; padding-left: 19px; }
  .jenkins header > svg { fill: none; stroke: #fff; stroke-width: 1.300; }
  .jenkins header > .logo { width: 28px; height: 40px; stroke: none; fill: initial; }
  .brand { font-family: 'DejaVu Serif', serif; font-weight: 700; font-size: 27.500px; letter-spacing: .200px; color: #fff; margin: -4px auto 0 12.500px; }
  .h-search { width: 17px; height: 17px; margin-right: 31px; }
  .h-bell { width: 16px; height: 18px; margin-right: 6px; }
  .h-shield { width: 18px; height: 18px; margin-right: 5px; }
  .count { width: 18px; height: 18px; border-radius: 50%; color: #fff; font-size: 12px; line-height: 18px; text-align: center; }
  .orange { background: #ff7606; margin-right: 17px; }
  .red { background: #f90606; margin-right: 17px; }
  .h-user { width: 17px; height: 17px; margin-right: 12px; }
  .h-down { width: 10px; height: 6px; margin-right: 20px; }
  .h-out { width: 17px; height: 15px; margin-right: 20px; }
  nav { height: 46px; background: #f6f7f9; display: flex; align-items: center; flex: none; gap: 14.300px; padding-left: 18.500px; font-size: 13.200px; }
  nav svg { width: 7px; height: 12px; }
  nav span:first-child { letter-spacing: -.180px; }
  .heading { display: flex; align-items: center; margin: 28px 25px 28px 28px; height: 44px; }
  .status { width: 44px; height: 44px; fill: none; stroke: #0bc64e; stroke-width: 3.600; stroke-linecap: round; stroke-linejoin: round; }
  .status path { stroke-width: 3; }
  .prev { width: 10px; height: 16px; margin-left: 9px; fill: none; stroke: #14141f; stroke-width: 2.100; }
  .heading h1 { margin: -7px 0 0 13px; font-family: 'Noto Sans', sans-serif; font-size: 23.500px; font-weight: 500; letter-spacing: -.200px; color: #08080f; }
  .actions { display: flex; gap: 12px; margin-left: auto; }
  .btn { box-sizing: border-box; height: 38px; border-radius: 10px; background: #f2f5f9; border: 2px solid #edf1f6; display: flex; align-items: center; justify-content: center; }
  .rebuild { width: 104px; background: #e3f8eb; border-color: #e3f8eb; color: #10be51; gap: 10px; padding-left: 3px; }
  .rebuild svg { width: 12px; height: 14px; }
  .console { width: 107px; gap: 7px; }
  .console svg { width: 18px; height: 16px; }
  .configure { width: 93px; }
  .card { box-sizing: border-box; border: 2px solid #e8ecf4; border-radius: 15px; margin-left: 26px; flex: none; }
  .pipeline { width: 907px; height: 165px; }
  .card-title { display: flex; justify-content: space-between; align-items: center; height: 20px; padding: 13px 18px 0 14px; }
  .card-title svg { width: 12px; height: 12px; }
  .graph { width: 903px; height: 60px; margin-top: 28px; }
  .graph text { text-anchor: middle; font-size: 13.200px; fill: #14141f; }
  .graph .italic { font-style: italic; letter-spacing: .200px; }
  .details { width: 446px; height: 161px; margin-top: 29px; }
  .row { height: 37px; display: flex; align-items: center; padding-left: 15px; gap: 12px; }
  .details .card-title { padding-bottom: 7px; }
  .row svg { width: 16px; height: 16px; margin-right: -1px; margin-top: -2px; }
  footer { margin: auto 27.500px 21px auto; }

  .plain { font-family: 'Liberation Serif', serif; color: #000; padding: 8px; font-size: 16px; }
  .plain h1 { font-size: 32px; margin: 0 0 22px; line-height: 36px; }
  .plain h2 { font-size: 24px; margin: 0 0 20px; line-height: 27px; }
  .plain p { margin: 0; line-height: 18px; }

  .taskbar { height: 59px; background: #202020; display: flex; align-items: center; color: #fff; position: relative; }
  .weather { display: flex; width: 367px; padding-left: 24px; align-items: center; }
  .weather svg { width: 36px; height: 38px; margin-top: -5px; }
  .weather div { display: flex; flex-direction: column; margin-left: 4.500px; font-size: 14.500px; line-height: 20px; }
  .weather b { font-weight: 400; font-size: 14px; }
  .weather span { color: #c8c8c8; }
  .start { width: 29px; height: 29px; margin: 2px 17px 0 1px; }
  .search { box-sizing: border-box; width: 275px; height: 40px; border-radius: 20px; background: #3e3e3e; border: 1px solid #545454; display: flex; align-items: center; padding: 0 5px 0 13px; margin-top: 1px; flex: none; }
  .lens { width: 20px; height: 20px; fill: none; stroke: #e0e0e0; stroke-width: 2.300; }
  .search span { font-size: 16.500px; color: #d2d2d2; margin: 1px auto 0 12px; }
  .plaza { width: 63px; height: 31px; }
  .pins { display: flex; margin-left: 2.500px; margin-top: 1px; }
  .pin { width: 55px; height: 50px; display: grid; place-items: center; position: relative; flex: none; }
  .pin > svg { width: 30px; height: 30px; }
  .running::before { content: ''; position: absolute; left: 2px; top: 0; width: 44px; height: 50px; box-sizing: border-box; border: 1px solid #3b3b3b; border-radius: 5px; background: #2e2e2e; box-shadow: 5px 0 0 -1px #2a2a2a, 5px 0 0 0 #383838; }
  .running > svg { position: relative; }
  .running::after, .open::after { content: ''; position: absolute; left: 18px; bottom: 0; width: 20px; height: 4px; border-radius: 2px; background: #4cc2ff; }
  .open::after { left: 23.500px; width: 8px; background: #9a9a9a; }
  .running > .profile { position: absolute; width: 19px; height: 19px; left: 29px; top: 4px; }
  .tray { margin-left: auto; display: flex; align-items: center; padding-right: 24px; margin-top: 1px; }
  .up { width: 14px; height: 9px; margin-right: 23px; }
  .onedrive { width: 21px; height: 17px; margin: 2px 19px 0 0; }
  .wifi { width: 20px; height: 16px; margin-right: 10px; }
  .volume { width: 20px; height: 16px; margin-right: 10px; }
  .battery { width: 20px; height: 18px; }
  .clock { display: flex; flex-direction: column; align-items: flex-end; width: 84px; font-size: 14.100px; line-height: 20px; }
</style>
